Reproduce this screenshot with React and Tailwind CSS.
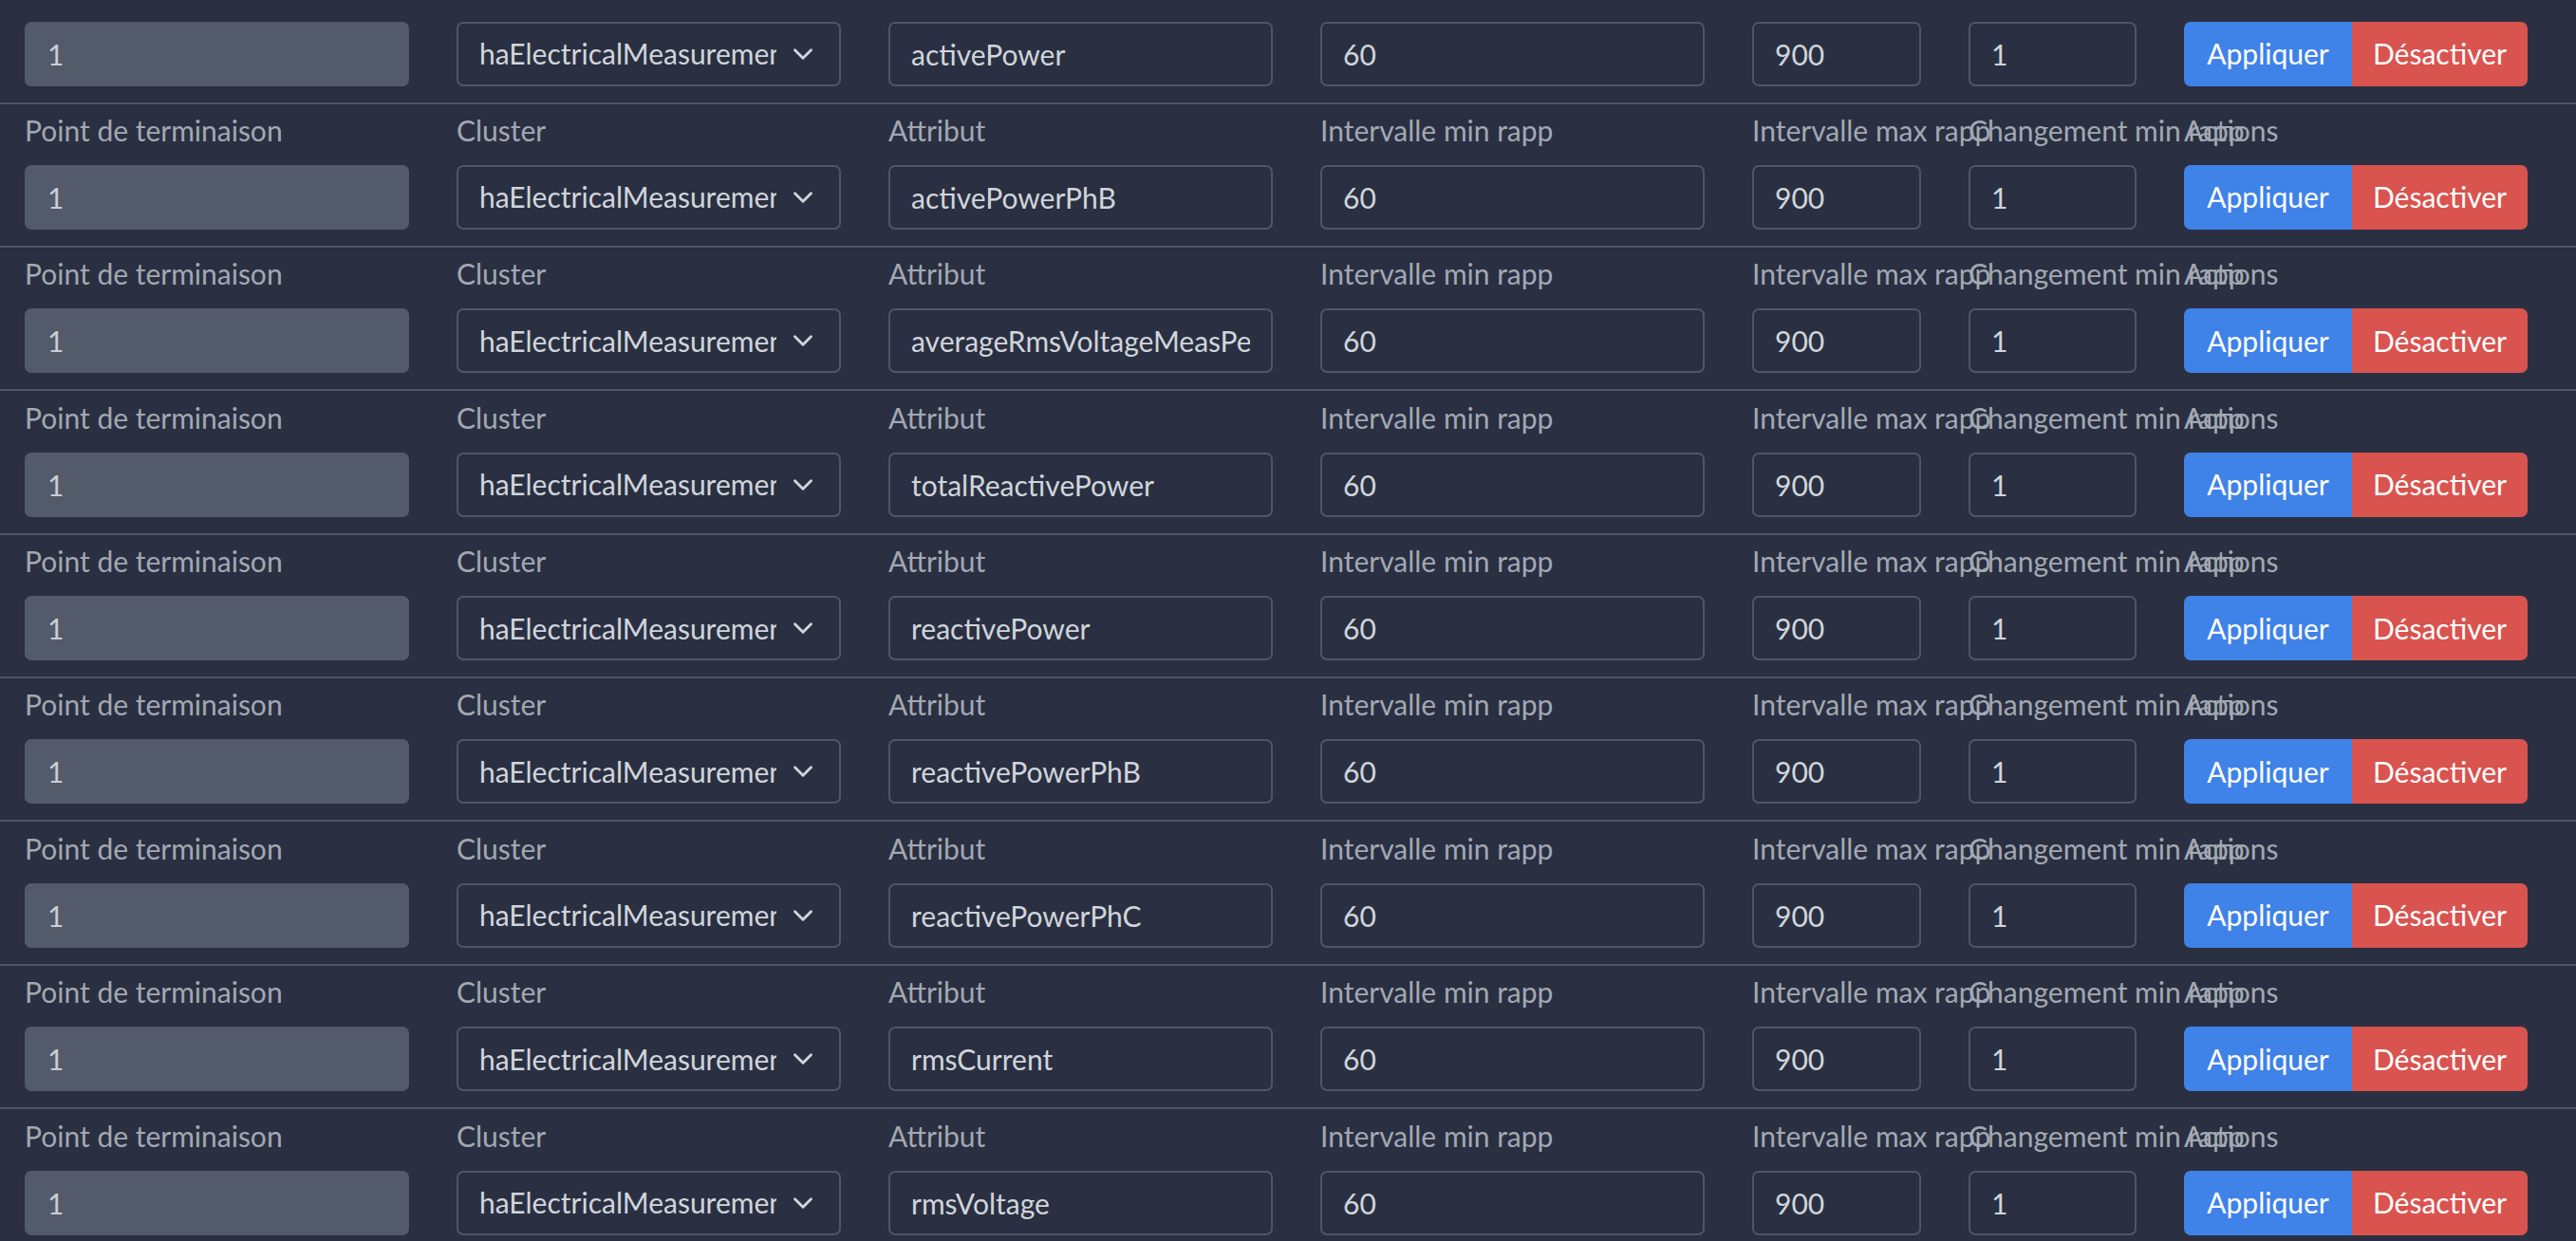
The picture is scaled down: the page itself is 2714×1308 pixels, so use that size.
import React from "react";
import { ChevronDown } from "lucide-react";

const attributes = [
  "activePower",
  "activePowerPhB",
  "averageRmsVoltageMeasPeriod",
  "totalReactivePower",
  "reactivePower",
  "reactivePowerPhB",
  "reactivePowerPhC",
  "rmsCurrent",
  "rmsVoltage",
  "rmsVoltagePhB",
];

const fieldInput =
  "h-[68px] w-full rounded-[7px] border-2 border-[#4f5666] bg-transparent px-[22px] text-[30px] text-[#d1d5db] outline-none";

function Field({ label, hideLabel, children }) {
  return (
    <div className="flex min-w-0 flex-col gap-[16px]">
      <label
        className={
          hideLabel
            ? "invisible whitespace-nowrap text-[30px] leading-[42px] text-[#a3a8b2]"
            : "whitespace-nowrap text-[30px] leading-[42px] text-[#a3a8b2]"
        }
      >
        {label}
      </label>
      {children}
    </div>
  );
}

function ReportingRow({ attribute, hideLabel }) {
  return (
    <div className="border-b-2 border-[#4f5666] px-[26px] pt-[6.4px] pb-[17px]">
      <div className="grid grid-cols-[405px_405px_405px_405px_178px_177px_362px] gap-x-[50px]">
        <Field label="Point de terminaison" hideLabel={hideLabel}>
          <input
            disabled
            defaultValue="1"
            className="h-[68px] w-full rounded-[7px] border-2 border-[#535a69] bg-[#535a69] px-[22px] text-[30px] text-[#c9cdd4] outline-none"
          />
        </Field>
        <Field label="Cluster" hideLabel={hideLabel}>
          <div className="relative">
            <select
              defaultValue="haElectricalMeasurement"
              className="h-[68px] w-full appearance-none rounded-[7px] border-2 border-[#4f5666] bg-transparent pl-[22px] pr-[66px] text-[30px] text-[#d1d5db] outline-none"
            >
              <option value="haElectricalMeasurement">haElectricalMeasurement</option>
            </select>
            <ChevronDown
              size={34}
              strokeWidth={2}
              className="pointer-events-none absolute right-[23px] top-1/2 -translate-y-1/2 text-[#d1d5db]"
            />
          </div>
        </Field>
        <Field label="Attribut" hideLabel={hideLabel}>
          <input defaultValue={attribute} className={fieldInput} />
        </Field>
        <Field label="Intervalle min rapp" hideLabel={hideLabel}>
          <input type="text" defaultValue="60" className={fieldInput} />
        </Field>
        <Field label="Intervalle max rapp" hideLabel={hideLabel}>
          <input type="text" defaultValue="900" className={fieldInput} />
        </Field>
        <Field label="Changement min rapp" hideLabel={hideLabel}>
          <input type="text" defaultValue="1" className={fieldInput} />
        </Field>
        <Field label="Actions" hideLabel={hideLabel}>
          <div className="flex h-[68px]">
            <button className="w-[177px] rounded-l-[7px] bg-[#3f82e8] text-[30px] text-white">Appliquer</button>
            <button className="w-[185px] rounded-r-[7px] bg-[#d9534f] text-[30px] text-white">Désactiver</button>
          </div>
        </Field>
      </div>
    </div>
  );
}

export default function App() {
  return (
    <div className="h-screen overflow-hidden bg-[#2a3042] font-['Lato',sans-serif]">
      {/* list is scrolled: first row's labels sit above the fold */}
      <div className="-mt-[41.9px]">
        {attributes.map((a, i) => (
          <ReportingRow key={a} attribute={a} hideLabel={i === 0} />
        ))}
      </div>
    </div>
  );
}
